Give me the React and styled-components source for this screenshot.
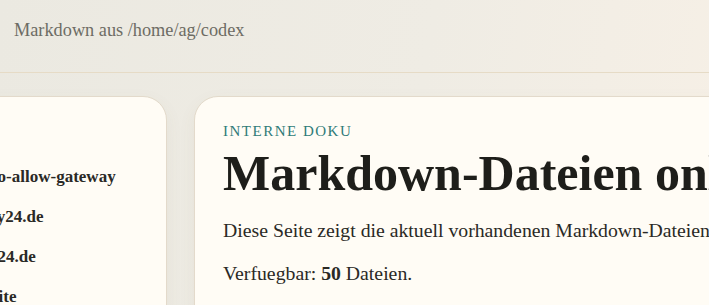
import React from "react";
import styled, { createGlobalStyle } from "styled-components";

const GlobalStyle = createGlobalStyle`
  html, body {
    margin: 0;
    padding: 0;
  }
  body {
    font-family: "Liberation Serif", "Times New Roman", serif;
    background: linear-gradient(100deg, #ebe9e1 0%, #efece4 55%, #f7f0e6 100%);
    min-height: 100vh;
    overflow: hidden;
  }
`;

const files = [
  "auto-allow-gateway",
  "play24.de",
  "dm24.de",
  "Invite",
];

export default function App() {
  return (
    <>
      <GlobalStyle />
      <TopBar>
        <Source>Markdown aus /home/ag/codex</Source>
      </TopBar>
      <Shell>
        <Sidebar>
          <FileList>
            {files.map((name) => (
              <FileItem key={name}>{name}</FileItem>
            ))}
          </FileList>
        </Sidebar>
        <Card>
          <Eyebrow>Interne Doku</Eyebrow>
          <Title>Markdown-Dateien online</Title>
          <Lead>
            Diese Seite zeigt die aktuell vorhandenen Markdown-Dateien im
            Verzeichnis.
          </Lead>
          <Lead>
            Verfuegbar: <strong>50</strong> Dateien.
          </Lead>
        </Card>
      </Shell>
    </>
  );
}

const TopBar = styled.header`
  height: 73px;
  padding: 20px 14px 0;
  box-sizing: border-box;
  border-bottom: 1px solid #e6dbc6;
`;

const Source = styled.p`
  margin: 0;
  font-size: 18.3px;
  color: #6d6c64;
`;

const Shell = styled.main`
  display: grid;
  grid-template-columns: 219px 560px;
  gap: 27px;
  margin-left: -52px;
  padding-top: 23px;
`;

const Panel = styled.section`
  background: #fffcf5;
  border: 1px solid #e3dacb;
  border-radius: 24px;
  box-shadow: 0 6px 18px rgba(120, 100, 70, 0.06);
  min-height: 320px;
`;

const Sidebar = styled(Panel)`
  padding: 68px 28px 0 25px;
`;

const FileList = styled.ul`
  list-style: none;
  margin: 0;
  padding: 0;
  display: flex;
  flex-direction: column;
  gap: 16px;
`;

const FileItem = styled.li`
  font-size: 17px;
  line-height: 24px;
  font-weight: 700;
  color: #2a2926;
  white-space: nowrap;
`;

const Card = styled(Panel)`
  padding: 25px 28px 0;
`;

const Eyebrow = styled.div`
  font-size: 15px;
  line-height: 18px;
  letter-spacing: 0.1em;
  text-transform: uppercase;
  color: #2f7b78;
  margin-bottom: 6px;
`;

const Title = styled.h1`
  margin: 0 0 15px;
  font-size: 50px;
  line-height: 1.1;
  font-weight: 700;
  color: #1e1e1a;
  white-space: nowrap;
`;

const Lead = styled.p`
  margin: 0 0 13px;
  font-size: 19.75px;
  line-height: 1.5;
  color: #2a2925;
  white-space: nowrap;

  strong {
    font-weight: 700;
  }
`;
